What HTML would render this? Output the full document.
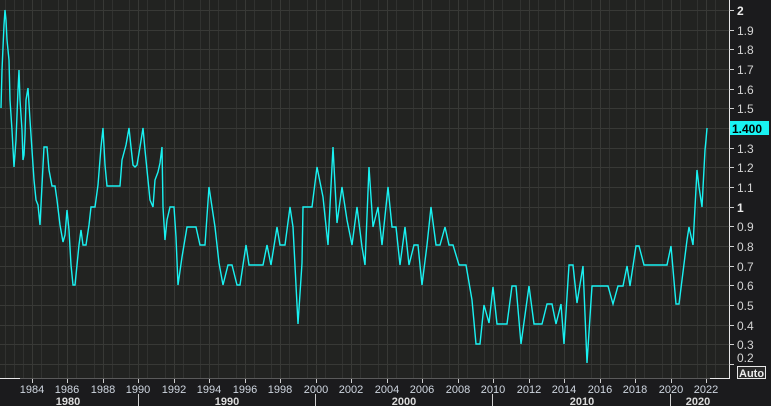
<!DOCTYPE html>
<html><head><meta charset="utf-8"><style>
html,body{margin:0;padding:0;background:#1b1b1d;}
svg{display:block;font-family:"Liberation Sans",sans-serif;}
</style></head><body>
<svg width="771" height="406" viewBox="0 0 771 406" xmlns="http://www.w3.org/2000/svg">
<rect x="0" y="0" width="771" height="406" fill="#1b1b1d"/>
<rect x="0" y="0" width="729" height="378" fill="#222321"/>
<g stroke="#313230" stroke-width="1">
<path id="vg" d="M5.5 0V378M14.5 0V378M23.5 0V378M41.5 0V378M58.5 0V378M76.5 0V378M94.5 0V378M112.5 0V378M129.5 0V378M147.5 0V378M165.5 0V378M183.5 0V378M200.5 0V378M218.5 0V378M236.5 0V378M254.5 0V378M271.5 0V378M289.5 0V378M307.5 0V378M325.5 0V378M342.5 0V378M360.5 0V378M378.5 0V378M396.5 0V378M413.5 0V378M431.5 0V378M449.5 0V378M467.5 0V378M484.5 0V378M502.5 0V378M520.5 0V378M538.5 0V378M555.5 0V378M573.5 0V378M591.5 0V378M609.5 0V378M626.5 0V378M644.5 0V378M662.5 0V378M680.5 0V378M697.5 0V378M715.5 0V378"/>
</g>
<g stroke="#383936" stroke-width="1">
<path d="M32.5 0V378M67.5 0V378M103.5 0V378M138.5 0V378M174.5 0V378M209.5 0V378M245.5 0V378M280.5 0V378M316.5 0V378M351.5 0V378M387.5 0V378M422.5 0V378M458.5 0V378M493.5 0V378M529.5 0V378M564.5 0V378M600.5 0V378M635.5 0V378M671.5 0V378M706.5 0V378"/>
<path d="M0 10.5H729M0 30.5H729M0 49.5H729M0 69.5H729M0 89.5H729M0 108.5H729M0 128.5H729M0 148.5H729M0 167.5H729M0 187.5H729M0 207.5H729M0 226.5H729M0 246.5H729M0 266.5H729M0 285.5H729M0 305.5H729M0 325.5H729M0 344.5H729M0 364.5H729"/>
</g>
<polyline fill="none" stroke="#19f2f2" stroke-width="1.4" stroke-linejoin="miter" points="1,108 2,70 4,25 5,10 6,20 7,40 9,60 10,100 12,130 14,167 16,140 18,90 19,70 20,100 22,130 23,160 24,155 25,135 26,100 28,88 30,120 32,150 34,180 36,200 38,205 40,225 42,185 44,147 47,147 49,170 52,186 55,186 57,200 60,225 63,242 65,235 67,210 69,230 71,265 73,285 75,285 77,265 79,245 81,230 83,245 86,245 89,225 91,207 95,207 98,185 101,147 103,128 105,165 107,186 120,186 122,160 126,145 129,128 131,147 133,165 135,167 137,165 140,147 143,128 145,150 148,180 150,200 153,207 155,180 158,172 160,163 162,147 163,207 165,240 167,220 170,207 174,207 176,237 178,285 182,257 187,227 196,227 200,245 205,245 209,187 215,227 219,263 223,285 228,265 232,265 237,285 240,285 246,245 249,265 263,265 267,245 271,265 277,227 280,245 285,245 290,207 293,227 298,324 302,263 303,207 312,207 317,167 323,197 328,245 333,147 337,223 342,187 347,220 352,245 357,207 362,247 365,265 369,167 373,227 378,207 382,245 388,187 392,227 396,227 400,265 405,227 409,265 414,245 418,245 422,285 427,245 431,207 436,245 440,245 445,227 449,245 453,245 459,265 466,265 472,300 476,344 480,344 484,305 489,323 493,287 497,324 507,324 512,286 516,286 521,344 529,286 534,324 542,324 547,304 552,304 556,324 561,304 564,344 569,265 573,265 577,303 583,266 587,363 592,286 608,286 613,304 618,286 623,286 627,266 630,286 636,246 639,246 644,265 667,265 671,246 676,304 679,304 687,240 689,227 693,245 697,170 699,187 702,207 705,150 706,140 707,128"/>
<!-- axes -->
<line x1="729.5" y1="0" x2="729.5" y2="378" stroke="#e8e8e8" stroke-width="1"/>
<line x1="0" y1="378.5" x2="729" y2="378.5" stroke="#5a5a5a" stroke-width="1"/>
<line x1="0" y1="378.5" x2="20" y2="378.5" stroke="#e8e8e8" stroke-width="1"/>
<line x1="710" y1="378.5" x2="730" y2="378.5" stroke="#e8e8e8" stroke-width="1"/>
<g stroke="#cfcfcf" stroke-width="1">
<path d="M729 10.5h5M729 30.5h5M729 49.5h5M729 69.5h5M729 89.5h5M729 108.5h5M729 148.5h5M729 167.5h5M729 187.5h5M729 207.5h5M729 226.5h5M729 246.5h5M729 266.5h5M729 285.5h5M729 305.5h5M729 325.5h5M729 344.5h5M729 364.5h5"/>
<path d="M32.5 379v4M67.5 379v4M103.5 379v4M138.5 379v4M174.5 379v4M209.5 379v4M245.5 379v4M280.5 379v4M316.5 379v4M351.5 379v4M387.5 379v4M422.5 379v4M458.5 379v4M493.5 379v4M529.5 379v4M564.5 379v4M600.5 379v4M635.5 379v4M671.5 379v4M706.5 379v4"/>
<path d="M138.5 394v12M315.5 394v12M492.5 394v12M670.5 394v12"/>
</g>
<g fill="#d4d4d4" font-size="12">
<text x="737" y="15" font-weight="bold" fill="#ececec">2</text>
<text x="737" y="35">1.9</text>
<text x="737" y="54">1.8</text>
<text x="737" y="74">1.7</text>
<text x="737" y="94">1.6</text>
<text x="737" y="113">1.5</text>
<text x="737" y="153">1.3</text>
<text x="737" y="172">1.2</text>
<text x="737" y="192">1.1</text>
<text x="737" y="212" font-weight="bold" fill="#ececec">1</text>
<text x="737" y="231">0.9</text>
<text x="737" y="251">0.8</text>
<text x="737" y="271">0.7</text>
<text x="737" y="290">0.6</text>
<text x="737" y="310">0.5</text>
<text x="737" y="330">0.4</text>
<text x="737" y="349">0.3</text>
<text x="737" y="362">0.2</text>
</g>
<rect x="730" y="121" width="39" height="14" fill="#19f2f2"/>
<text x="732" y="133" font-size="12" font-weight="bold" fill="#000">1.400</text>
<rect x="737.5" y="366.5" width="28" height="12" fill="#2a2a2a" stroke="#e8e8e8" stroke-width="1"/>
<text x="739" y="377" font-size="11" font-weight="bold" fill="#ececec">Auto</text>
<g fill="#cfd6e0" font-size="11" text-anchor="middle">
<text x="32" y="393">1984</text><text x="67" y="393">1986</text><text x="103" y="393">1988</text><text x="138" y="393">1990</text><text x="174" y="393">1992</text><text x="209" y="393">1994</text><text x="245" y="393">1996</text><text x="280" y="393">1998</text><text x="316" y="393">2000</text><text x="351" y="393">2002</text><text x="387" y="393">2004</text><text x="422" y="393">2006</text><text x="458" y="393">2008</text><text x="493" y="393">2010</text><text x="529" y="393">2012</text><text x="564" y="393">2014</text><text x="600" y="393">2016</text><text x="635" y="393">2018</text><text x="671" y="393">2020</text><text x="706" y="393">2022</text>
</g>
<g fill="#dcdcdc" font-size="11" font-weight="bold" text-anchor="middle">
<text x="68" y="405">1980</text><text x="227" y="405">1990</text><text x="404" y="405">2000</text><text x="582" y="405">2010</text><text x="698" y="405">2020</text>
</g>
</svg>
</body></html>
